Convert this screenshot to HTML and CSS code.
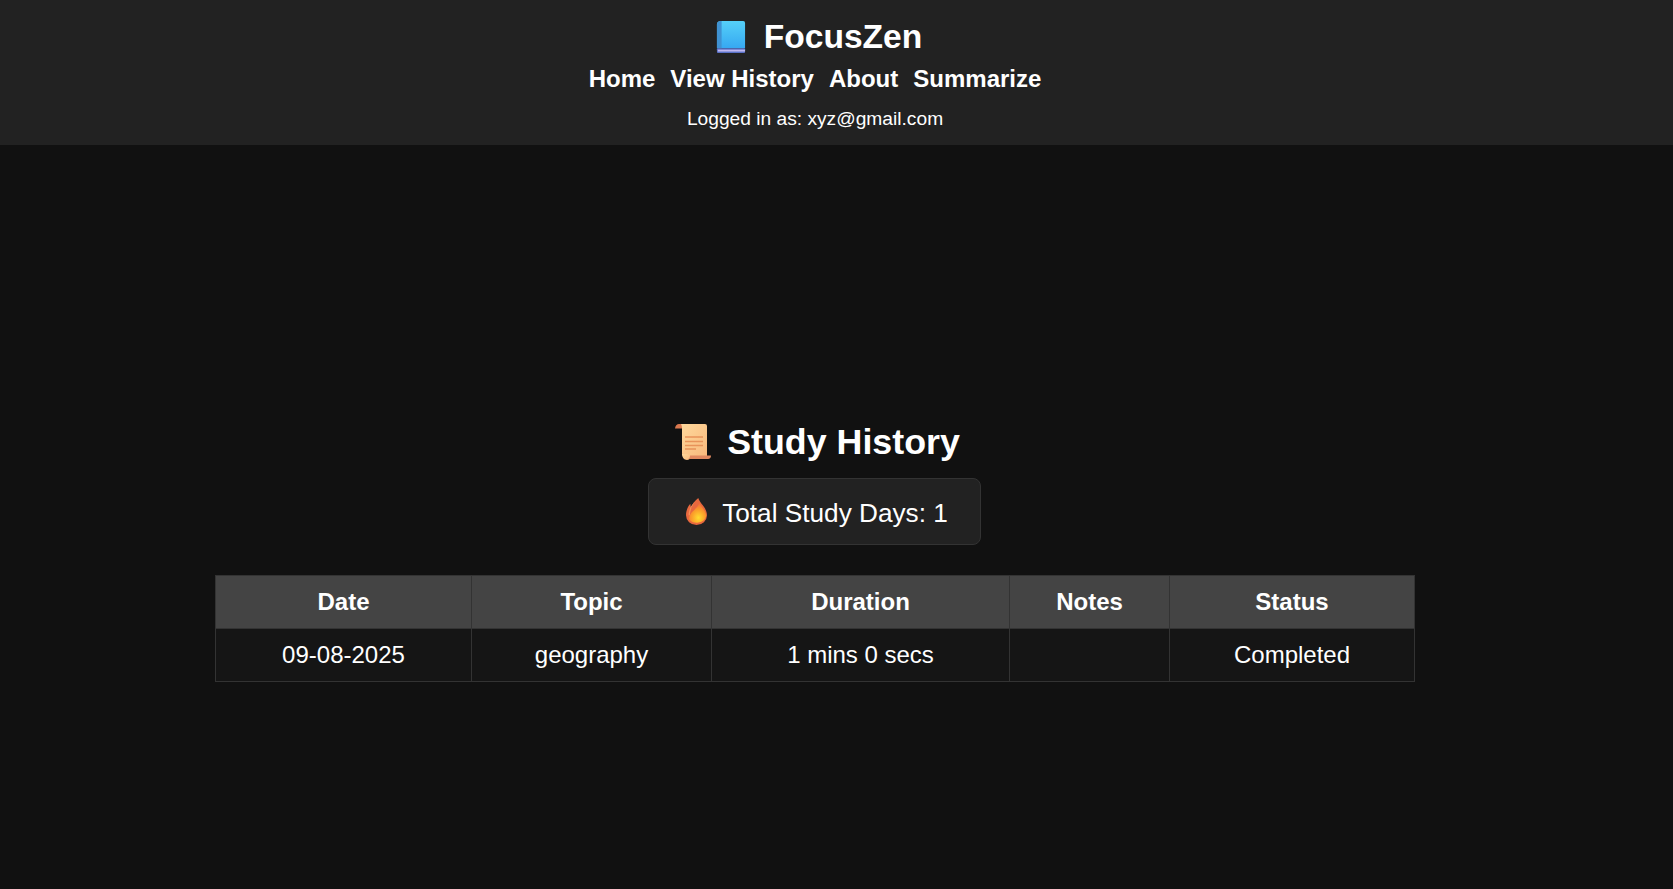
FILE: index.html
```html
<!DOCTYPE html>
<html lang="en">
<head>
<meta charset="utf-8">
<title>FocusZen</title>
<link rel="stylesheet" href="styles.css">
</head>
<body>
<header class="site-header">
  <h1 class="brand">
    <svg class="emoji emoji-book" viewBox="0 0 32 36" aria-hidden="true">
      <defs><linearGradient id="bk" x1="0" y1="0" x2="0" y2="1"><stop offset="0" stop-color="#55d0f8"/><stop offset="1" stop-color="#36a8f2"/></linearGradient></defs>
      <path d="M5 1h24a2 2 0 0 1 2 2v27H1V5a4 4 0 0 1 4-4z" fill="url(#bk)"/>
      <path d="M5 1a4 4 0 0 0-4 4v25h5V1z" fill="#3f92d2"/>
      <rect x="1" y="30" width="30" height="5" rx="1" fill="#5a72c8"/>
      <rect x="2" y="31.5" width="29" height="2" fill="#c0b8f0"/>
    </svg>
    <span>FocusZen</span>
  </h1>
  <nav class="nav">
    <a href="#">Home</a>
    <a href="#">View History</a>
    <a href="#">About</a>
    <a href="#">Summarize</a>
  </nav>
  <p class="user">Logged in as: xyz@gmail.com</p>
</header>
<main class="history">
  <h2 class="title">
    <svg class="emoji emoji-scroll" viewBox="0 0 36 36" aria-hidden="true">
      <defs><linearGradient id="sc" x1="0" y1="0" x2="1" y2="1"><stop offset="0" stop-color="#fed89c"/><stop offset="1" stop-color="#f9b97c"/></linearGradient></defs>
      <path d="M4 0h6v4.5H0C0 2 2 0 4 0z" fill="#d9784f"/>
      <path d="M6 0h24a2 2 0 0 1 2 2v31H13c-3 0-6 0-6-4V4c0-2-1-4-1-4z" fill="url(#sc)"/>
      <path d="M7 30c0 3 2 6 5 6s4-3 4-4l-4-2z" fill="url(#sc)"/>
      <path d="M10 13h18M10 17.5h18M10 21.5h18M10 25h11" stroke="#e8935a" stroke-width="1.5"/>
      <path d="M15 31.5h21c0 2-1 3.500-3 3.500H13c1.500 0 2-2 2-3.500z" fill="#e28a60"/>
    </svg>
    <span>Study History</span>
  </h2>
  <div class="streak">
    <svg class="emoji emoji-fire" viewBox="0 0 24 28" preserveAspectRatio="none" aria-hidden="true">
      <defs><radialGradient id="fi" cx="0.55" cy="0.75" r="0.72"><stop offset="0" stop-color="#ffdc30"/><stop offset="0.55" stop-color="#fb9d2a"/><stop offset="1" stop-color="#f2693a"/></radialGradient></defs>
      <path d="M14 0C16 6 24 10 24 18A12 10 0 0 1 0 18C0 13 2 9 5 6C5 8 5.500 9 6 10C7 6 10 3 14 0z" fill="#e8683e"/>
      <path d="M10 4C6 8 3 12 3 18h1.500C4.500 13 7 8 10 4z" fill="#f4905a"/>
      <path d="M15.500 5C17 10 23 12 23 19A11 9 0 0 1 3.500 22C3.500 14 13 12 15.500 5z" fill="url(#fi)"/>
    </svg>
    <span class="streak-text">Total Study Days: 1</span>
  </div>
  <table class="sessions">
    <thead>
      <tr><th class="c-date">Date</th><th class="c-topic">Topic</th><th class="c-duration">Duration</th><th class="c-notes">Notes</th><th>Status</th></tr>
    </thead>
    <tbody>
      <tr><td>09-08-2025</td><td>geography</td><td>1 mins 0 secs</td><td></td><td>Completed</td></tr>
    </tbody>
  </table>
</main>
</body>
</html>
```
FILE: styles.css
```css
* { box-sizing: border-box; }
html, body { margin: 0; height: 100%; }
body {
  background: #111;
  color: #fff;
  font-family: "Liberation Sans", Arial, sans-serif;
  overflow: hidden;
}
.site-header {
  background: #222;
  height: 145px;
  padding: 17px 43px 0 0;
  display: flex;
  flex-direction: column;
  align-items: center;
}
.brand {
  margin: 0;
  font-size: 33.6px;
  line-height: 40px;
  font-weight: 700;
  display: flex;
  align-items: center;
  gap: 18px;
}
.emoji { display: block; flex: none; }
.emoji-book { width: 30px; height: 36px; margin-left: 8px; }
.nav {
  display: flex;
  gap: 15px;
  margin-top: 7px;
}
.nav a {
  color: #fff;
  text-decoration: none;
  font-weight: 700;
  font-size: 24px;
  line-height: 30px;
}
.user {
  margin: 14px 0 0;
  font-size: 19.2px;
  line-height: 22px;
}
.history {
  padding: 0 43px 0 0;
  display: flex;
  flex-direction: column;
  align-items: center;
  margin-top: 276px;
}
.title {
  margin: 0;
  font-size: 35.8px;
  line-height: 42px;
  font-weight: 700;
  display: flex;
  align-items: center;
  gap: 16px;
}
.emoji-scroll { width: 36px; height: 36px; margin-left: 5px; }
.streak {
  margin-top: 15px;
  margin-right: 1px;
  width: 333px;
  height: 67px;
  background: #222;
  border: 1px solid #333;
  border-radius: 8px;
  display: flex;
  align-items: center;
  justify-content: center;
  gap: 15px;
  font-size: 26.2px;
}
.streak-text { padding-top: 3px; }
.emoji-fire { width: 21px; height: 27px; margin-left: 5px; }
.sessions {
  margin-top: 30px;
  width: 1200px;
  border-collapse: collapse;
  table-layout: fixed;
  font-size: 24px;
}
.sessions th, .sessions td {
  border: 1px solid #333;
  height: 53px;
  padding: 0;
  text-align: center;
}
.sessions td { background: #151515; }
.sessions th { background: #444; font-weight: 700; }
.c-date { width: 256px; }
.c-topic { width: 240px; }
.c-duration { width: 298px; }
.c-notes { width: 160px; }
```
